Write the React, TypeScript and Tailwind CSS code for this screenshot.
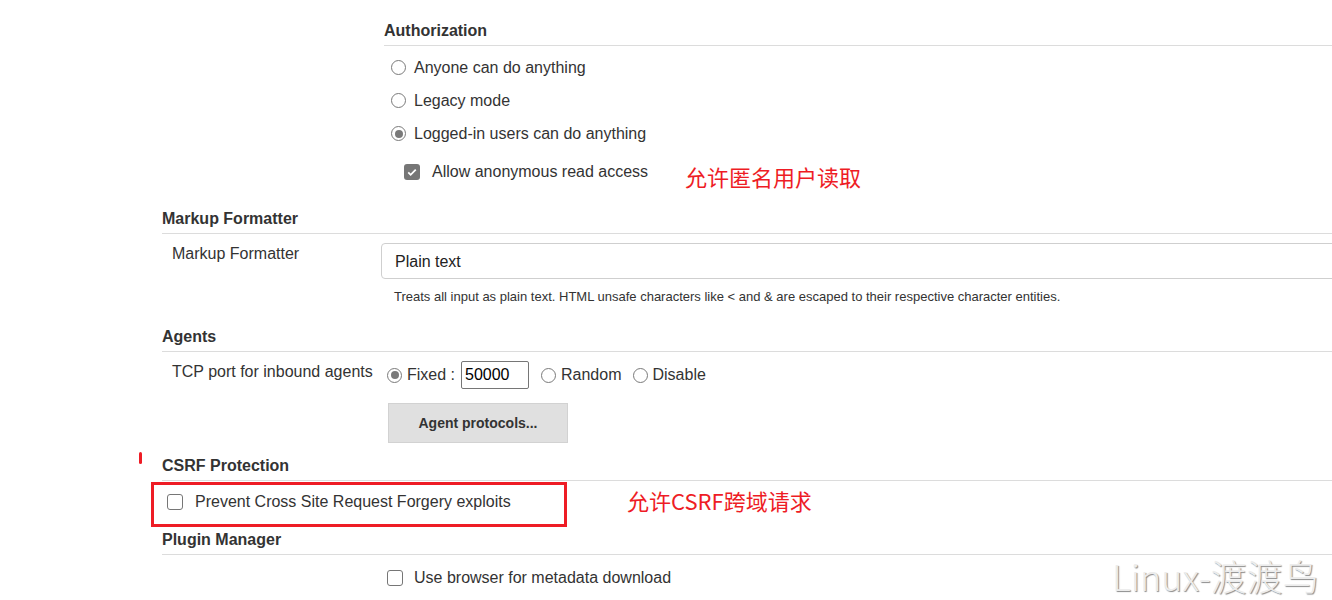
import React from "react";

function Radio({ checked }: { checked?: boolean }) {
  return (
    <span className="flex h-[15px] w-[15px] shrink-0 items-center justify-center rounded-full border border-[#7a7a7a] bg-white">
      {checked && <span className="h-[8px] w-[8px] rounded-full bg-[#7a7a7a]" />}
    </span>
  );
}

function Checkbox({ checked }: { checked?: boolean }) {
  if (checked) {
    return (
      <span className="flex h-[16px] w-[16px] shrink-0 items-center justify-center rounded-[3px] bg-[#767676]">
        <svg viewBox="0 0 16 16" className="h-[12px] w-[12px]">
          <path d="M3 8.5l3.2 3.2L13 4.8" fill="none" stroke="#fff" strokeWidth="2.4" />
        </svg>
      </span>
    );
  }
  return <span className="h-[16px] w-[16px] shrink-0 rounded-[3px] border border-[#767676] bg-white" />;
}

function SectionHeader({ children }: { children: React.ReactNode }) {
  return (
    <div className="border-b border-[#dcdcdc] pb-[4px] text-[16px] font-bold leading-[20px] text-[#333]">
      {children}
    </div>
  );
}

const note = "font-['Noto_Sans_CJK_SC',sans-serif] text-[22px] leading-[30px] text-[#ee1c25]";

export default function App() {
  return (
    <div className="relative min-h-[600px] overflow-hidden bg-white pl-[162px] font-['Liberation_Sans',Arial,sans-serif] text-[16px] text-[#333]">
      {/* Authorization */}
      <div className="ml-[222px] pt-[21px]">
        <SectionHeader>Authorization</SectionHeader>
        <div className="mt-[5px]">
          <label className="flex h-[33px] items-center gap-[8px] pl-[7px]">
            <Radio />
            <span>Anyone can do anything</span>
          </label>
          <label className="flex h-[33px] items-center gap-[8px] pl-[7px]">
            <Radio />
            <span>Legacy mode</span>
          </label>
          <label className="flex h-[33px] items-center gap-[8px] pl-[7px]">
            <Radio checked />
            <span>Logged-in users can do anything</span>
          </label>
          <div className="mt-[5px] flex h-[33px] items-center pl-[20px]">
            <Checkbox checked />
            <span className="ml-[12px]">Allow anonymous read access</span>
            <span className={`ml-[37px] mt-[8px] ${note}`}>允许匿名用户读取</span>
          </div>
        </div>
      </div>

      {/* Markup Formatter */}
      <div className="mt-[21px]">
        <SectionHeader>Markup Formatter</SectionHeader>
        <div className="mt-[9px] flex items-start">
          <div className="mt-[1px] w-[219px] shrink-0 pl-[10px] leading-[20px]">Markup Formatter</div>
          <div className="-mr-[10px] flex h-[36px] flex-1 items-center rounded-[4px] border border-[#cfcfcf] pl-[13px] pt-[1px] text-[#222]">
            Plain text
          </div>
        </div>
        <div className="ml-[232px] mt-[10px] text-[13px] leading-[16px] text-[#333]">
          Treats all input as plain text. HTML unsafe characters like &lt; and &amp; are escaped to their respective character entities.
        </div>
      </div>

      {/* Agents */}
      <div className="mt-[22px]">
        <SectionHeader>Agents</SectionHeader>
        <div className="mt-[9px] flex items-start">
          <div className="mt-[1px] w-[219px] shrink-0 whitespace-nowrap pl-[10px] leading-[20px]">
            TCP port for inbound agents
          </div>
          <div className="flex h-[28px] items-center pl-[6px]">
            <Radio checked />
            <span className="ml-[5px]">Fixed :</span>
            <input
              readOnly
              value="50000"
              className="ml-[6px] h-[28px] w-[68px] rounded-[2px] border border-[#767676] pl-[3px] text-[16px] text-black outline-none"
            />
            <span className="ml-[12px]">
              <Radio />
            </span>
            <span className="ml-[5px]">Random</span>
            <span className="ml-[11px]">
              <Radio />
            </span>
            <span className="ml-[5px]">Disable</span>
          </div>
        </div>
        <button className="ml-[226px] mt-[14px] block h-[40px] w-[180px] border border-[#d2d2d2] bg-[#e0e0e0] text-[14px] font-bold text-[#333]">
          Agent protocols...
        </button>
      </div>

      {/* CSRF Protection */}
      <div className="mt-[13px]">
        <div className="relative">
          <span className="absolute left-[-23px] top-[-4px] h-[12px] w-[3px] rounded-full bg-[#ee1c25]" />
          <SectionHeader>CSRF Protection</SectionHeader>
        </div>
        <div className="ml-[-11px] mt-[1px] flex items-center">
          <div className="flex h-[45px] w-[416px] items-center border-[3px] border-[#ee1c25] pb-[5px] pl-[13px]">
            <Checkbox />
            <span className="ml-[12px]">Prevent Cross Site Request Forgery exploits</span>
          </div>
          <span className={`mb-[9px] ml-[60px] ${note}`}>允许CSRF跨域请求</span>
        </div>
      </div>

      {/* Plugin Manager */}
      <div className="mt-[3px]">
        <SectionHeader>Plugin Manager</SectionHeader>
        <div className="ml-[225px] mt-[6px] flex h-[33px] items-center">
          <Checkbox />
          <span className="ml-[11px]">Use browser for metadata download</span>
        </div>
      </div>

      {/* watermark */}
      <div className="absolute left-[1112px] top-[553px] font-['Noto_Sans_CJK_SC',sans-serif] text-[36px] font-light leading-[44px] text-[#ececec] [text-shadow:1px_1px_1px_#8a8a8a]">
        Linux-渡渡鸟
      </div>
    </div>
  );
}
